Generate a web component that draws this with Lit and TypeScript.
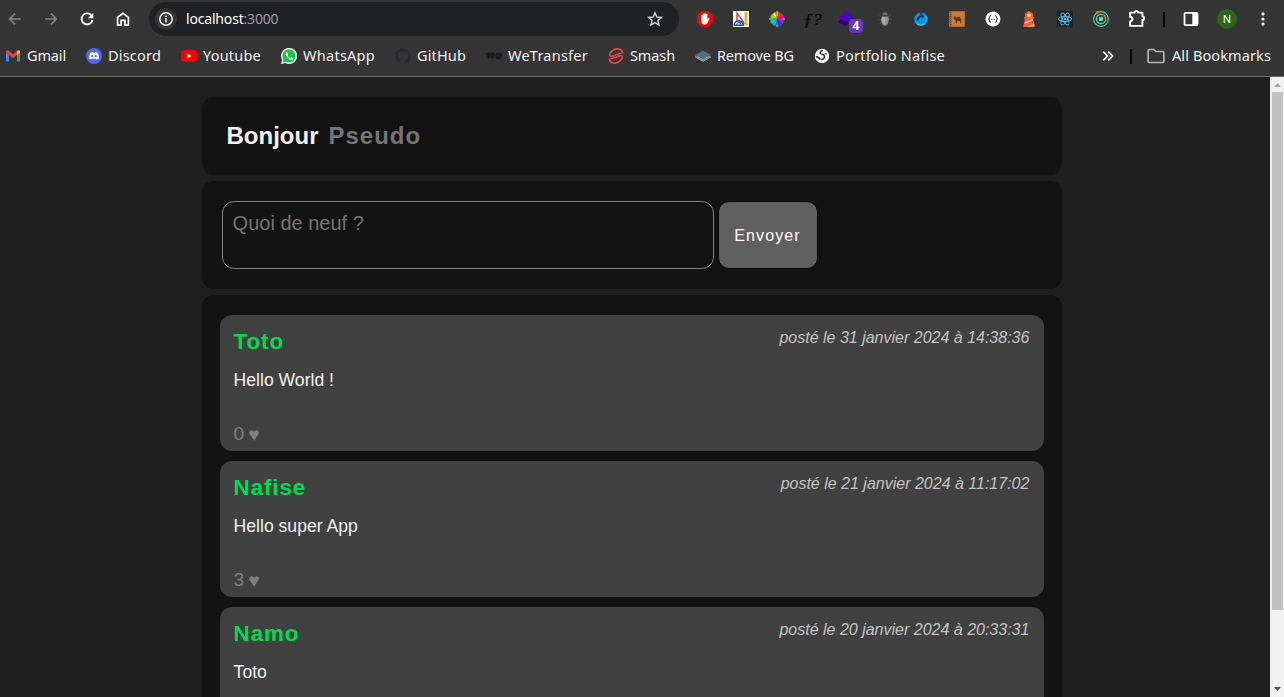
import { LitElement, html, css, svg, nothing } from "lit";
import { customElement } from "lit/decorators.js";

type Shape = unknown;
const icon = (body: Shape, size = 16, box = "0 0 16 16") =>
  html`<svg width=${size} height=${size} viewBox=${box} fill="none">${body}</svg>`;

const nav = {
  back: svg`<path d="M13.700 8H3M8 2.700 2.700 8 8 13.300" stroke="#858585" stroke-width="1.700"/>`,
  forward: svg`<path d="M2.300 8H13M8 2.700 13.300 8 8 13.300" stroke="#858585" stroke-width="1.700"/>`,
  reload: svg`<path d="M13 5.300A5.500 5.500 0 1 0 13.500 9" stroke="#fff" stroke-width="1.900"/><path d="M14.300 1.800v5.400H8.900z" fill="#fff"/>`,
  home: svg`<path d="M2.600 6.300 8 2.200l5.400 4.100v7.900H9.900V9.300H6.100v4.900H2.600z" stroke="#fff" stroke-width="1.700"/>`,
};

const wedge = (a: number, color: string) => {
  const p = (d: number) => `${8 + 6.9 * Math.cos((d * Math.PI) / 180)} ${8 + 6.9 * Math.sin((d * Math.PI) / 180)}`;
  return svg`<path d="M8 8 L${p(a)} L${p(a + 31)}z" fill=${color}/>`;
};
const wheel = ["#ff00f0", "#b010ff", "#3a20f0", "#1070f0", "#00c5e5", "#00e0a0", "#19d83b", "#90e800", "#f0f000", "#ff9a00", "#f52810", "#f0108a"];

const extensions: Shape[] = [
  icon(svg`<path d="M4.700 0h6.600L16 4.700v6.600L11.300 16H4.700L0 11.300V4.700z" fill="#ea0c0c"/><path d="M4.300 8.600V4.800a.75.75 0 0 1 1.500 0V3.300a.75.75 0 0 1 1.500 0v-.6a.8.8 0 0 1 1.600 0v.9a.75.75 0 0 1 1.500 0V8.300l.9-1c.6-.5 1.500 0 1.100.8l-1.900 3.700c-.6 1.200-1.500 1.600-2.700 1.600-2.200 0-3.500-1.500-3.500-3.500z" fill="#fff"/>`),
  icon(svg`<path d="M0 0h16v16H0z" fill="#fff"/><path d="M4 2v8.500l7 1.300z" fill="#fbe9ec" stroke="#cf4a5c" stroke-width="1.500"/><path d="M11.500 1h3v13.500h-3z" fill="#e6bd45"/><path d="M12 3h1m-1 3h1m-1 3h1m-1 3h1" stroke="#a98520" stroke-width=".6"/><path d="M1.200 14.300a4.600 4.600 0 0 1 9.200 0z" stroke="#1d4fa0" stroke-width="1.500"/><path d="M3.700 13.800a2.100 2.100 0 0 1 4.200 0" stroke="#1d4fa0"/>`),
  icon(svg`${wheel.map((c, i) => wedge(i * 30 - 15, c))}<circle cx="8" cy="8" r="7" stroke="#77705f" stroke-width=".7"/><g fill="#999"><circle cx="8" cy="1" r="1"/><circle cx="8" cy="15" r="1"/><circle cx="1" cy="8" r="1"/><circle cx="15" cy="8" r="1"/></g>`),
  html`<span class="fq">ƒ?</span>`,
  html`<span class="stack">${icon(svg`<path d="M8 4 16 7 8 15.500 0 11.500 1.500 9z" fill="#32047d"/><path d="m8 0 8 4.500L8.500 10.500 0 7z" fill="#4b08b8"/>`)}<b class="badge">4</b></span>`,
  icon(svg`<path d="M4.500 5.500 2 3.500M4.500 8.500H1.500m3 2.500L2 13.500M11.500 5.500 14 3.500M11.500 8.500h3m-3 2.500 2.500 2.500" stroke="#505050" stroke-width=".7"/><path d="M5.400 4.200a2.600 3 0 0 1 5.200 0z" fill="#717171"/><path d="M4.600 5.400h6.800Q12.500 9 11.300 12 10 14.700 8 15q-2-.3-3.300-3Q3.500 9 4.600 5.400z" fill="#929292"/><path d="M5.300 6.200h2.500v7Q5.800 12.500 5.200 10z" fill="#b0b0b0"/>`),
  icon(svg`<circle cx="8" cy="8.300" r="6.700" fill="#0a93ea"/><path d="M3.700 9.200Q3.500 5 8 4.500L6.800 3.200 10.200 3.600 11 5.500 9.800 7.400 9.200 6.200Q6 6 5.300 10z" fill="#22384f"/><path d="M7.500.9 6.200 3.700 9 2.800l-.3-2z" fill="#353535"/><path d="M2 10.500c1.500 5 9 5.500 11.700 0-2.500 3.500-8.500 3.500-11.700 0z" fill="#3cc6fb"/><path d="M12 4.500q3 3 1 6" stroke="#1ab0f5" stroke-width="1.400"/>`),
  icon(svg`<rect width="16" height="16" rx="1" fill="#b0642a"/><path d="M3 1h12v14H3z" fill="#c87c38"/><path d="M1.500 1v14" stroke="#7d4319" stroke-dasharray="1 1"/><path d="M4.300 6.300 5.500 5l1 .6.300 1.600 1.300-1.700 1 .8 1.200-.9 1.400 1.900 1 2.200-.6.500.3 2.200h-.9l-.8-2.200H8.300L7.700 12.400h-.9L6.500 9.500 5.200 8.200l-.2-1.300z" fill="#6d3810"/>`),
  icon(svg`<circle cx="8" cy="8" r="7.500" fill="#fff"/><path d="M5.800 4.700q-1.500 0-1.300 1.500.2 1.500-1.200 1.800 1.400.3 1.200 1.800-.2 1.500 1.300 1.500M10.200 4.700q1.500 0 1.300 1.500-.2 1.500 1.200 1.800-1.400.3-1.200 1.800.2 1.500-1.300 1.500" stroke="#111" stroke-width=".9"/><path d="M6.200 8.300h3.600" stroke="#444" stroke-dasharray=".8 .6"/>`),
  icon(svg`<path d="M8 0 12 2.500V6h1v1.500h-1l2 8.500H2l2-8.500H3V6h1V2.500z" fill="#f46034"/><path d="m4 11 7.800-3 .3 1.200L3.500 13zM6 16l7-3.200.4 1.800L10.500 16z" fill="#ffb396"/><circle cx="8" cy="4.300" r="1.900" fill="#ffdc35"/>`),
  icon(svg`<path d="M0 0h16v16H0z" fill="#202225"/><g stroke="#53c4e9" stroke-width=".95"><ellipse cx="8" cy="8" rx="6.700" ry="2.500"/><ellipse cx="8" cy="8" rx="6.700" ry="2.500" transform="rotate(60 8 8)"/><ellipse cx="8" cy="8" rx="6.700" ry="2.500" transform="rotate(120 8 8)"/></g><circle cx="8" cy="8" r="1.300" fill="#53c4e9"/>`),
  icon(svg`<g stroke="#5fd3a1"><circle cx="8" cy="8" r="7.400" stroke-width="1.100"/><circle cx="8" cy="8" r="4.600" stroke-width="1.200"/></g><circle cx="8" cy="8" r="2.300" fill="#60e5a7"/><circle cx="4.300" cy="1.600" r="1.500" fill="#f26a1b"/><circle cx="11.300" cy="4.800" r="1.500" fill="#f4512c"/>`),
  icon(svg`<path d="M2 3.500h4.200C6 1.400 9.800 1.400 9.600 3.500h4v3.600c2.200-.1 2.200 3.500 0 3.400V16H2v-4.300c3-.4 3-3.900 0-4.300z" transform="translate(0 -1)" stroke="#fff" stroke-width="1.800" stroke-linejoin="round"/>`, 18, "0 0 17 17"),
];

const bookmarks: { label: string; w: number; art: Shape }[] = [
  { label: "Gmail", w: 39, art: svg`<path d="M1 3.500v10h3V7z" fill="#4285f4"/><path d="M15 3.500v10h-3V7z" fill="#34a853"/><path d="M1 4c0-2 2-2 3-1l4 3.200L12 3v4l-4 3.200L4 7 1 5z" fill="#ea4335"/><path d="M12 3c1-1 3-1 3 1v1l-3 2.300z" fill="#fbbc04"/>` },
  { label: "Discord", w: 53, art: svg`<circle cx="8" cy="8" r="8" fill="#5865f2"/><path d="M4.500 4.800q1.200-.7 2.200-.8l.4.700h1.800l.4-.7q1 .1 2.200.8 1.900 2.700 1.700 5.500-1.100 1-2.500 1.200l-.6-1q-2.100.5-4.200 0l-.6 1Q3.900 11.300 2.800 10.300 2.600 7.500 4.500 4.800z" fill="#fff"/><circle cx="6.200" cy="8.200" r="1.100" fill="#5865f2"/><circle cx="9.800" cy="8.200" r="1.100" fill="#5865f2"/>` },
  { label: "Youtube", w: 58, art: svg`<rect y="2.300" width="16" height="11.400" rx="3" fill="#f00"/><path d="M6.400 5.600v4.800l4.200-2.400z" fill="#fff"/>` },
  { label: "WhatsApp", w: 72, art: svg`<path d="M0 16l1.100-4.200A8 8 0 1 1 4.300 15z" fill="#fff"/><path d="m1.500 14.500.9-3A6.600 6.600 0 1 1 4.700 13.700z" fill="#19c44b"/><path d="M5.500 4.300c-1.500 1-1 3 1 5.200s4 3.400 5.300 2c.9-1.100.4-1.400-1.400-2.200-.7.900-.9 1.100-1.200.9A7 7 0 0 1 6.500 7.400c-.2-.5.9-.8.6-1.500-.6-1.400-.8-1.900-1.600-1.600z" fill="#fff"/>` },
  { label: "GitHub", w: 49, art: svg`<path d="M8 .2a8 8 0 0 0-2.500 15.500c.4.100.5-.2.500-.4v-1.500c-2.200.5-2.700-1-2.700-1-.4-.9-.9-1.100-.9-1.100-.8-.5 0-.5 0-.5.9 0 1.300.8 1.300.8.7 1.300 1.900.9 2.400.7.100-.5.3-.9.5-1.100-1.800-.2-3.700-.9-3.700-4 0-.8.3-1.600.9-2.100-.1-.2-.4-1 .1-2.100 0 0 .7-.2 2.200.8a7.500 7.500 0 0 1 4 0c1.500-1 2.200-.8 2.200-.8.5 1.100.2 1.900.1 2.100.5.5.8 1.300.8 2.100 0 3.100-1.900 3.800-3.700 4 .3.300.6.800.6 1.500v2.200c0 .2.100.5.5.4A8 8 0 0 0 8 .2z" fill="#24292f"/>` },
  { label: "WeTransfer", w: 80, art: svg`<path d="M0 4.800v3q0 2.900 1.600 2.900T4.300 9q.9 1.700 2.600 1.700T8.800 7.800v-3z" fill="#1c1c1e"/><path d="M14.700 9.500q-4.700 2-4.700-1.500 0-2.600 2.600-2.600t2.400 2.400l-4.500.4" stroke="#1c1c1e" stroke-width="2"/>` },
  { label: "Smash", w: 45, art: svg`<path d="M14.800 4.500C13.500.3 8.500 0 5 2.200S.4 8.700 4 8.400C7 8 10 4.800 13 5.300M1.200 11.500c1.300 4.200 6.300 4.500 9.800 2.300s4.600-6.500 1-6.200c-3 .4-6 3.600-9 3.100" stroke="#ee4455" stroke-width="1.600" stroke-linecap="round"/>` },
  { label: "Remove BG", w: 77, art: svg`<path d="M0 9.200 8 13.700l8-4.500-8-4z" fill="#c0c5ca"/><path d="M0 7.500 8 12l8-4.500V9l-8 4.200L0 9z" fill="#777f86"/><path d="M0 7 8 2.500 16 7l-8 4.500z" fill="#5a6b79"/>` },
  { label: "Portfolio Nafise", w: 109, art: svg`<circle cx="8" cy="8" r="7.200" fill="#fff"/><path d="M9 2.600Q7 2.800 6.300 4.200 5.800 6 8 6.300q2.600.4 2.500 2.400-.2 2.300-3.300 3.100" stroke="#2f3033" stroke-width="1.500"/><path d="M1.500 7.800q2.300.2 3.800 1.200 1.600 1 1.500 2.500l-1 .8Q5 10.500 3.500 10.300 2 10 1.500 7.800zM10.500 5.200l2.600.2-.8 1.800z" fill="#2f3033"/>` },
];

interface Post { author: string; date: string; text: string; likes?: number }
const posts: Post[] = [
  { author: "Toto", date: "31 janvier 2024 à 14:38:36", text: "Hello World !", likes: 0 },
  { author: "Nafise", date: "21 janvier 2024 à 11:17:02", text: "Hello super App", likes: 3 },
  { author: "Namo", date: "20 janvier 2024 à 20:33:31", text: "Toto" },
];

@customElement("browser-chrome")
class BrowserChrome extends LitElement {
  static styles = css`
    :host { display: block; height: 76px; background: #353535; border-bottom: 1px solid #6a6a6a; color: #f1f1f1; font: 14.5px/20px "Noto Sans", sans-serif; }
    svg { display: block; flex: none; }
    .tools { display: flex; align-items: center; height: 38px; }
    .nav { display: flex; margin-left: -3px; }
    .cell { width: 36px; display: flex; justify-content: center; align-items: center; }
    .omni { display: flex; align-items: center; width: 530px; height: 34px; box-sizing: border-box; border-radius: 17px; background: #202124; margin: 0 8px; padding: 0 16px 0 6px; }
    .info { width: 22px; height: 22px; border-radius: 50%; background: #353535; display: grid; place-items: center; margin-right: 9px; }
    .url { flex: 1; font-size: 14px; letter-spacing: -0.18px; color: #fff; }
    .port { color: #999da2; }
    .fq { font: italic 17.5px/18px "Liberation Serif", serif; -webkit-text-stroke: 0.4px #080808; letter-spacing: 0.5px; color: #080808; }
    .stack { position: relative; left: -3px; }
    .badge { position: absolute; left: 11px; top: 8px; width: 14px; height: 14px; border-radius: 3px; background: #6838b8; color: #fff; font: bold 12px/14px "Noto Sans", sans-serif; text-align: center; }
    .sep { width: 18px; display: flex; justify-content: center; }
    .bar { width: 2px; height: 15px; background: #080808; }
    .avatar { width: 20px; height: 20px; border-radius: 50%; background: #2f651d; color: #fff; font-size: 11px; line-height: 20px; text-align: center; }
    .marks { display: flex; align-items: center; gap: 20px; height: 36px; padding: 0 13px 0 5px; }
    .mark { display: flex; align-items: center; gap: 6px; white-space: nowrap; }
    .mark span, .all { padding-bottom: 2px; }
    .end { margin-left: auto; display: flex; align-items: center; }
    .end .bar { margin: 0 15px 0 14px; }
    .all { margin-left: 7px; width: 99px; white-space: nowrap; }
  `;

  /* Tracks each label so that its text fills the width of its slot. */
  private fit() {
    this.renderRoot.querySelectorAll<HTMLElement>("[data-w]").forEach((el) => {
      el.style.letterSpacing = "0";
      const range = document.createRange();
      range.selectNodeContents(el);
      const n = (el.textContent ?? "").length;
      el.style.letterSpacing = `${(Number(el.dataset.w) - range.getBoundingClientRect().width) / n}px`;
    });
  }

  firstUpdated() {
    this.fit();
    document.fonts?.ready.then(() => this.fit());
  }

  render() {
    return html`
      <div class="tools">
        <div class="nav">${[nav.back, nav.forward, nav.reload, nav.home].map((n) => html`<div class="cell">${icon(n)}</div>`)}</div>
        <div class="omni">
          <div class="info">${icon(svg`<circle cx="8" cy="8" r="6.200" stroke="#f1f1f1" stroke-width="1.500"/><path d="M8 7v4.500M8 4.500v1.600" stroke="#f1f1f1" stroke-width="1.500"/>`)}</div>
          <div class="url">localhost<span class="port">:3000</span></div>
          ${icon(svg`<path d="m8 1.800 1.800 4.200 4.600.4-3.500 3 1.100 4.500L8 11.500l-4 2.400 1.100-4.500-3.500-3L6.200 6z" stroke="#c9cacc" stroke-width="1.500"/>`)}
        </div>
        ${extensions.map((e) => html`<div class="cell">${e}</div>`)}
        <div class="sep"><i class="bar"></i></div>
        <div class="cell">${icon(svg`<rect x="1.500" y="1.900" width="13" height="12.200" rx="1" stroke="#fff" stroke-width="1.800"/><path d="M9.300 2h5.200v12H9.300z" fill="#fff"/>`)}</div>
        <div class="cell"><div class="avatar">N</div></div>
        <div class="cell">${icon(svg`<g fill="#fff"><circle cx="8" cy="2.900" r="1.600"/><circle cx="8" cy="8" r="1.600"/><circle cx="8" cy="13.100" r="1.600"/></g>`)}</div>
      </div>
      <div class="marks">
        ${bookmarks.map((b) => html`<div class="mark">${icon(b.art)}<span data-w=${b.w} style="width:${b.w}px">${b.label}</span></div>`)}
        <div class="end">
          ${icon(svg`<path d="m3.200 3.700 4.300 4.300-4.300 4.300M8.200 3.700 12.500 8l-4.300 4.300" stroke="#f1f1f1" stroke-width="1.700"/>`)}
          <i class="bar"></i>
          ${icon(svg`<path d="M1 3.200q0-1 1-1h4.200L8 4h6q1 0 1 1v7.800q0 1-1 1H2q-1 0-1-1z" stroke="#b5b5b5" stroke-width="1.500"/>`, 18)}
          <span class="all" data-w="99">All Bookmarks</span>
        </div>
      </div>`;
  }
}

@customElement("feed-post")
class FeedPost extends LitElement {
  static properties = { post: { attribute: false } };
  declare post: Post;
  static styles = css`
    :host { display: block; height: 136px; box-sizing: border-box; border-radius: 12px; background: #414141; padding: 12px 14.600px 0 13.600px; flex: none; }
    .top { display: flex; justify-content: space-between; }
    .author { margin: 0; color: #00dc50; font-size: 22.400px; line-height: 29px; letter-spacing: 0.900px; }
    .date { color: #c4c4c4; font-size: 16px; line-height: 22px; }
    .text { margin: 13px 0 0; color: #f1f1f1; font-size: 17.600px; line-height: 22px; }
    .likes { display: flex; gap: 4px; margin: 31px 0 0; color: #808080; font-size: 19.200px; line-height: 24px; }
    .heart { padding-top: 1px; }
  `;
  render() {
    const p = this.post;
    return html`
      <div class="top"><h2 class="author">${p.author}</h2><em class="date">posté le ${p.date}</em></div>
      <p class="text">${p.text}</p>
      ${p.likes === undefined ? nothing : html`<p class="likes"><span>${p.likes}</span><span class="heart">♥</span></p>`}`;
  }
}

@customElement("app-root")
class AppRoot extends LitElement {
  static styles = css`
    :host { display: flex; flex-direction: column; height: 697px; overflow: hidden; font-family: "Liberation Sans", Arial, sans-serif; }
    .view { display: flex; flex: 1; min-height: 0; background: #1f1f1f; }
    .page { flex: 1; overflow: hidden; display: flex; flex-direction: column; align-items: center; gap: 6px; padding: 20px 6px 0 0; }
    .card { width: 860px; flex: none; box-sizing: border-box; border-radius: 12px; background: #131313; }
    .hello { height: 78px; display: flex; align-items: center; padding-left: 24.500px; margin: 0; font-size: 24px; font-weight: bold; color: #f1f1f1; white-space: pre; }
    .pseudo { margin-left: 10px; color: #757575; letter-spacing: 1px; }
    .form { height: 108px; display: flex; align-items: center; gap: 4px; padding-left: 20px; }
    .field { box-sizing: border-box; width: 492px; height: 68px; border: 1px solid #858585; border-radius: 12px; padding: 10px 9.600px; color: #757575; font-size: 20px; line-height: 23px; }
    .send { box-sizing: border-box; width: 100px; height: 68px; border: 1px solid #080808; border-radius: 11px; background: #606060; color: #fff; font: 16px "Liberation Sans", sans-serif; letter-spacing: 1.100px; padding: 2px 1px 0 0; }
    .feed { display: flex; flex-direction: column; gap: 10px; padding: 20px 18px; border-radius: 12px 12px 0 0; }
    .scroll { width: 14px; background: #f1f1f1; display: flex; flex-direction: column; align-items: center; }
    .scroll svg { display: block; }
    .thumb { width: 11px; height: 518px; margin: 0 0 0 1px; background: #c1c1c1; }
    .down { margin-top: auto; }
  `;
  render() {
    return html`
      <browser-chrome></browser-chrome>
      <div class="view">
        <main class="page">
          <h1 class="card hello">Bonjour<span class="pseudo">Pseudo</span></h1>
          <section class="card form">
            <div class="field">Quoi de neuf ?</div>
            <button class="send">Envoyer</button>
          </section>
          <section class="card feed">${posts.map((p) => html`<feed-post .post=${p}></feed-post>`)}</section>
        </main>
        <div class="scroll">
          <svg width="14" height="15" viewBox="0 0 14 15"><path d="m7.500 6 3.500 4H4z" fill="#a3a3a3"/></svg>
          <div class="thumb"></div>
          <svg class="down" width="14" height="15" viewBox="0 0 14 15"><path d="m7.500 9 3.500-4H4z" fill="#505050"/></svg>
        </div>
      </div>`;
  }
}
